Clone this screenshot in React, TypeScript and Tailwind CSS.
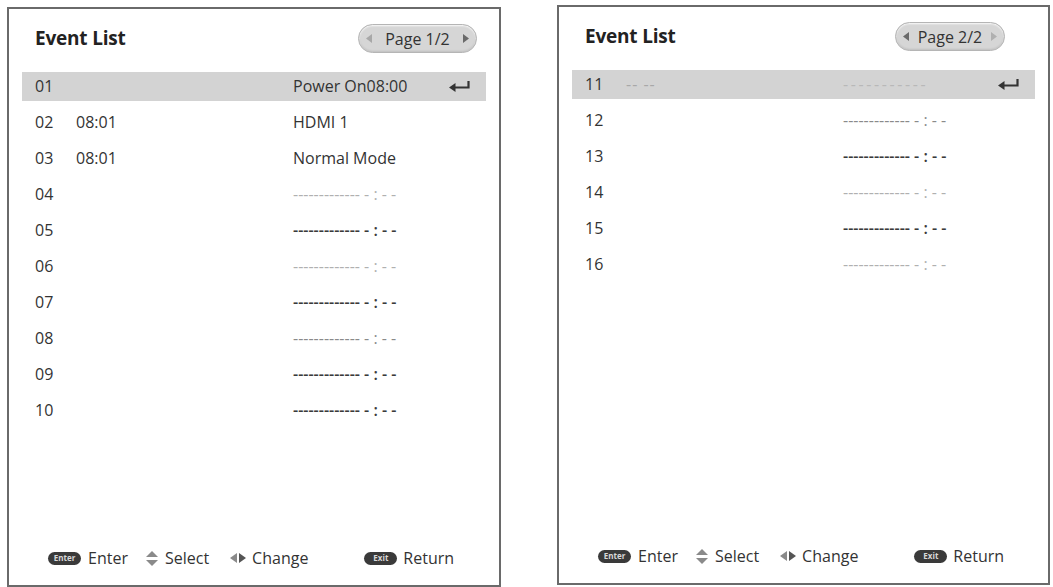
import React from "react";

type Row = {
  num: string;
  time?: string;
  timeLight?: boolean;
  event?: string;
  dash?: "light" | "mid" | "dark" | "sel";
  selected?: boolean;
};

const DASH = "------------- - : - -";

function ReturnArrow() {
  return (
    <svg width="23" height="13" viewBox="0 0 23 13" className="block">
      <path d="M20.5 1 V7.5 H6" stroke="#333" strokeWidth="2.2" fill="none" />
      <polygon points="1,7.5 7.5,3 7.5,12" fill="#333" />
    </svg>
  );
}

function Tri({ dir, color }: { dir: "l" | "r"; color: string }) {
  return (
    <svg width="6" height="9" viewBox="0 0 6 9" className="block">
      {dir === "l" ? (
        <polygon points="0,4.5 6,0 6,9" fill={color} />
      ) : (
        <polygon points="6,4.5 0,0 0,9" fill={color} />
      )}
    </svg>
  );
}

function Pill({ label, leftColor, rightColor, w }: { label: string; leftColor: string; rightColor: string; w: string }) {
  return (
    <div
      className={`${w} h-[29px] rounded-full bg-[#d6d6d6] border border-[#b5b5b5] flex items-center justify-between px-[7px] shadow-[inset_0_1px_2px_rgba(255,255,255,0.9),inset_0_-1px_2px_rgba(0,0,0,0.12)]`}
    >
      <Tri dir="l" color={leftColor} />
      <span className="text-[16px] text-[#333] leading-none">{label}</span>
      <Tri dir="r" color={rightColor} />
    </div>
  );
}

function KeyPill({ label }: { label: string }) {
  return (
    <div className="w-[33px] h-[13px] rounded-full bg-[#3a3a3a] flex items-center justify-center">
      <span className="text-[8px] leading-none text-[#d8d8d8] font-bold">{label}</span>
    </div>
  );
}

function UpDown() {
  return (
    <svg width="12" height="15" viewBox="0 0 12 15" className="block">
      <polygon points="6,0 12,6 0,6" fill="#8a8a8a" />
      <polygon points="6,15 12,9 0,9" fill="#8a8a8a" />
    </svg>
  );
}

function LeftRight() {
  return (
    <svg width="16" height="10" viewBox="0 0 16 10" className="block">
      <polygon points="0,5 7,0 7,10" fill="#8a8a8a" />
      <polygon points="16,5 9,0 9,10" fill="#555" />
    </svg>
  );
}

function dashClass(d?: Row["dash"]) {
  if (d === "light") return "text-[#b0b0b0]";
  if (d === "mid") return "text-[#8a8a8a]";
  if (d === "dark") return "text-[#3a3a3a] font-semibold";
  return "text-[#b8b8b8] tracking-[2.6px]";
}

function Panel({
  rows,
  page,
  pillW,
  pillMr,
  leftC,
  rightC,
  mt,
  w,
}: {
  rows: Row[];
  page: string;
  pillW: string;
  pillMr: string;
  leftC: string;
  rightC: string;
  mt: string;
  w: string;
}) {
  return (
    <div className={`${mt} ${w} h-[580px] border-2 border-[#6a6a6a] bg-white flex flex-col px-[13px] shrink-0`}>
      <div className="h-[59px] flex items-center justify-between">
        <span className="pl-[13px] text-[19px] font-bold text-[#222] tracking-[-0.2px]">Event List</span>
        <div className={pillMr}>
          <Pill label={page} leftColor={leftC} rightColor={rightC} w={pillW} />
        </div>
      </div>
      <div className="flex flex-col">
        {rows.map((r) => (
          <div key={r.num} className="h-[36px] flex items-center">
            <div
              className={`h-[29px] w-full grid grid-cols-[41px_217px_1fr_auto] items-center pl-[13px] pr-[15px] ${
                r.selected ? "bg-[#d3d3d3]" : ""
              }`}
            >
              <span className="text-[#333]">{r.num}</span>
              <span className={r.timeLight ? "text-[#a8a8a8] tracking-[1px]" : "text-[#333]"}>{r.time ?? ""}</span>
              <span className={r.event ? "text-[#333]" : dashClass(r.dash)}>
                {r.event ?? (r.dash === "sel" ? "-----------" : DASH)}
              </span>
              <span>{r.selected ? <ReturnArrow /> : null}</span>
            </div>
          </div>
        ))}
      </div>
      <div className="flex-1" />
      <div className="h-[54px] flex items-center pl-[26px] text-[16px] text-[#333]">
        <KeyPill label="Enter" />
        <span className="ml-[7px]">Enter</span>
        <span className="ml-[18px]">
          <UpDown />
        </span>
        <span className="ml-[7px]">Select</span>
        <span className="ml-[21px]">
          <LeftRight />
        </span>
        <span className="ml-[6px]">Change</span>
        <span className="ml-[56px]">
          <KeyPill label="Exit" />
        </span>
        <span className="ml-[6px]">Return</span>
      </div>
    </div>
  );
}

export default function App() {
  const left: Row[] = [
    { num: "01", event: "Power On08:00", selected: true },
    { num: "02", time: "08:01", event: "HDMI 1" },
    { num: "03", time: "08:01", event: "Normal Mode" },
    { num: "04", dash: "light" },
    { num: "05", dash: "dark" },
    { num: "06", dash: "light" },
    { num: "07", dash: "dark" },
    { num: "08", dash: "mid" },
    { num: "09", dash: "dark" },
    { num: "10", dash: "dark" },
  ];
  const right: Row[] = [
    { num: "11", time: "-- --", timeLight: true, dash: "sel", selected: true },
    { num: "12", dash: "mid" },
    { num: "13", dash: "dark" },
    { num: "14", dash: "light" },
    { num: "15", dash: "dark" },
    { num: "16", dash: "light" },
  ];
  return (
    <div
      className="w-[1053px] h-[587px] bg-white flex items-start overflow-hidden text-[16px]"
      style={{ fontFamily: '"Open Sans", "Noto Sans", sans-serif' }}
    >
      <div className="ml-[7px]">
        <Panel rows={left} page="Page 1/2" pillW="w-[119px]" pillMr="mr-[9px]" leftC="#a8a8a8" rightC="#6a6a6a" mt="mt-[7px]" w="w-[494px]" />
      </div>
      <div className="ml-[56px]">
        <Panel rows={right} page="Page 2/2" pillW="w-[110px]" pillMr="mr-[30px]" leftC="#6a6a6a" rightC="#b0b0b0" mt="mt-[5px]" w="w-[493px]" />
      </div>
    </div>
  );
}
